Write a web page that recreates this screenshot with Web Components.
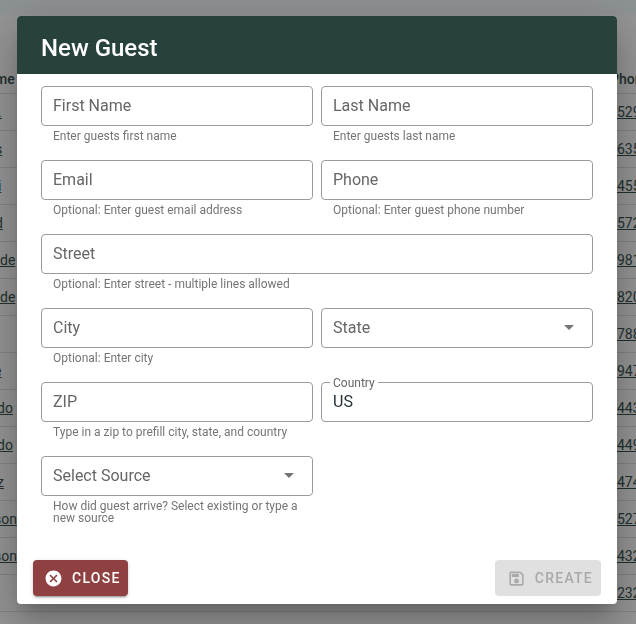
<!DOCTYPE html>
<html lang="en">
<head>
<meta charset="utf-8">
<title>New Guest</title>
<style>
    html, body { margin: 0; height: 100%; overflow: hidden; }
    body { font-family: Roboto, "Liberation Sans", sans-serif; background: #fff; }
    .field-wide { grid-column: 1 / -1; }
</style>
</head>
<body>
<guest-table>
    <guest-row name="me" phone="Phon" shift="-5" head></guest-row>
    <guest-row name="." phone="529" shift="-2"></guest-row>
    <guest-row name="s" phone="635" shift="-5"></guest-row>
    <guest-row name="i" phone="455" shift="-2"></guest-row>
    <guest-row name="d" phone="572" shift="-5"></guest-row>
    <guest-row name="de" phone="981"></guest-row>
    <guest-row name="de" phone="820"></guest-row>
    <guest-row name="" phone="788"></guest-row>
    <guest-row name="e" phone="947" shift="-6"></guest-row>
    <guest-row name="do" phone="443" shift="-3"></guest-row>
    <guest-row name="do" phone="449" shift="-3"></guest-row>
    <guest-row name="z" phone="474" shift="-3"></guest-row>
    <guest-row name="son" phone="527" shift="-6"></guest-row>
    <guest-row name="son" phone="432" shift="-6"></guest-row>
    <guest-row name="" phone="232"></guest-row>
</guest-table>

<guest-dialog>
    <span slot="title">New Guest</span>
    <guest-field label="First Name" hint="Enter guests first name"></guest-field>
    <guest-field label="Last Name" hint="Enter guests last name"></guest-field>
    <guest-field label="Email" hint="Optional: Enter guest email address"></guest-field>
    <guest-field label="Phone" hint="Optional: Enter guest phone number"></guest-field>
    <guest-field class="field-wide" label="Street" hint="Optional: Enter street - multiple lines allowed"></guest-field>
    <guest-field label="City" hint="Optional: Enter city"></guest-field>
    <guest-field label="State" select></guest-field>
    <guest-field label="ZIP" hint="Type in a zip to prefill city, state, and country"></guest-field>
    <guest-field label="Country" value="US"></guest-field>
    <guest-field label="Select Source" select hint="How did guest arrive? Select existing or type a new source"></guest-field>
    <guest-button slot="actions" icon="cancel">Close</guest-button>
    <guest-button slot="actions" icon="save" disabled>Create</guest-button>
</guest-dialog>

<script>
class GuestTable extends HTMLElement {
    constructor() {
        super();
        this.attachShadow({ mode: 'open' });
        this.shadowRoot.innerHTML = `
            <style>
                :host {
                    display: flex;
                    flex-direction: column;
                    height: 100vh;
                    overflow: hidden;
                    padding-top: 57px;
                    box-sizing: border-box;
                    background: linear-gradient(#f2fafc 0 12px, #fff 16px);
                }
            </style>
            <slot></slot>
        `;
    }
}

class GuestRow extends HTMLElement {
    constructor() {
        super();
        this.attachShadow({ mode: 'open' });
    }

    connectedCallback() {
        const isHead = this.hasAttribute('head');
        const shift = this.getAttribute('shift') || 0;
        this.shadowRoot.innerHTML = `
            <style>
                :host {
                    display: flex;
                    flex: none;
                    justify-content: space-between;
                    align-items: center;
                    height: 37px;
                    box-sizing: border-box;
                    padding-top: ${isHead ? 7 : 0}px;
                    border-bottom: 1px solid #e0e0e0;
                    font: ${isHead ? 500 : 400} 14px Roboto, sans-serif;
                    color: #3a5450;
                    text-decoration: ${isHead ? 'none' : 'underline'};
                }
                .name { margin-left: ${shift}px; }
                .phone { width: ${isHead ? 26 : 19}px; overflow: hidden; white-space: nowrap; }
            </style>
            <span class="name">${this.getAttribute('name')}</span>
            <span class="phone">${this.getAttribute('phone')}</span>
        `;
    }
}

class GuestDialog extends HTMLElement {
    constructor() {
        super();
        this.attachShadow({ mode: 'open' });
        this.shadowRoot.innerHTML = `
            <style>
                :host {
                    position: fixed;
                    inset: 0;
                    display: flex;
                    padding: 16px 19px 20px 17px;
                    box-sizing: border-box;
                    background: rgba(0, 0, 0, 0.42);
                }
                .paper {
                    flex: 1;
                    display: flex;
                    flex-direction: column;
                    background: #fff;
                    border-radius: 4px;
                    overflow: hidden;
                    box-shadow: 0 11px 15px -7px rgba(0, 0, 0, 0.2),
                                0 24px 38px 3px rgba(0, 0, 0, 0.14),
                                0 9px 46px 8px rgba(0, 0, 0, 0.12);
                }
                header {
                    height: 58px;
                    display: flex;
                    align-items: center;
                    padding: 5px 24px 0;
                    box-sizing: border-box;
                    background: #27413d;
                    color: #fff;
                    font: 500 24px Roboto, sans-serif;
                }
                .form {
                    flex: 1;
                    display: grid;
                    grid-template-columns: 1fr 1fr;
                    align-content: start;
                    gap: 18px 8px;
                    padding: 12px 24px;
                }
                footer {
                    display: flex;
                    justify-content: space-between;
                    padding: 8px 16px;
                }
            </style>
            <div class="paper">
                <header><slot name="title"></slot></header>
                <div class="form"><slot></slot></div>
                <footer><slot name="actions"></slot></footer>
            </div>
        `;
    }
}

class GuestField extends HTMLElement {
    constructor() {
        super();
        this.attachShadow({ mode: 'open' });
    }

    connectedCallback() {
        const label = this.getAttribute('label');
        const hint = this.getAttribute('hint');
        const value = this.getAttribute('value');
        const arrow = this.hasAttribute('select')
            ? '<svg class="arrow" viewBox="0 0 24 24"><path d="M7 10l5 5 5-5z"/></svg>'
            : '';
        this.shadowRoot.innerHTML = `
            <style>
                :host {
                    display: block;
                    min-width: 0;
                    font-family: Roboto, sans-serif;
                }
                .box {
                    position: relative;
                    display: flex;
                    align-items: center;
                    height: 40px;
                    padding: 0 11px 2px;
                    box-sizing: border-box;
                    border: 1px solid #9b9b9b;
                    border-radius: 4px;
                    font-size: 16px;
                }
                .label { color: #666; flex: 1; }
                .value { color: #263238; flex: 1; }
                /* floated label sits in a gap cut out of the border */
                .float {
                    position: absolute;
                    top: -6px;
                    left: 8px;
                    padding: 0 3px;
                    background: #fff;
                    color: #666;
                    font-size: 12px;
                    line-height: 12px;
                }
                .arrow { width: 24px; height: 24px; fill: #757575; }
                .hint {
                    margin: 4px 12px 0;
                    color: #757575;
                    font-size: 12px;
                    line-height: 12px;
                }
            </style>
            <div class="box">
                ${value
                    ? `<span class="float">${label}</span><span class="value">${value}</span>`
                    : `<span class="label">${label}</span>`}
                ${arrow}
            </div>
            ${hint ? `<div class="hint">${hint}</div>` : ''}
        `;
    }
}

const BUTTON_ICONS = {
    cancel: 'M12 2C6.47 2 2 6.47 2 12s4.47 10 10 10 10-4.47 10-10S17.53 2 12 2zm5 13.59L15.59 17 12 13.41 8.41 17 7 15.59 10.59 12 7 8.41 8.41 7 12 10.59 15.59 7 17 8.41 13.41 12 17 15.59z',
    save: 'M17 3H5c-1.11 0-2 .9-2 2v14c0 1.1.89 2 2 2h14c1.1 0 2-.9 2-2V7l-4-4zm2 16H5V5h11.17L19 7.83V19zm-7-7c-1.66 0-3 1.34-3 3s1.34 3 3 3 3-1.34 3-3-1.34-3-3-3zM6 6h9v4H6z'
};

class GuestButton extends HTMLElement {
    constructor() {
        super();
        this.attachShadow({ mode: 'open' });
    }

    connectedCallback() {
        const isDisabled = this.hasAttribute('disabled');
        this.shadowRoot.innerHTML = `
            <style>
                :host {
                    display: inline-flex;
                    align-items: center;
                    gap: 9px;
                    height: 36px;
                    padding: 0 ${isDisabled ? '8px 0 12px' : '7px 0 11px'};
                    border-radius: 4px;
                    font: 500 14px Roboto, sans-serif;
                    letter-spacing: 1.25px;
                    text-transform: uppercase;
                    background: ${isDisabled ? '#e0e0e0' : '#8f4141'};
                    color: ${isDisabled ? '#a9a9a9' : '#fff'};
                    box-shadow: ${isDisabled ? 'none' : '0 3px 1px -2px rgba(0,0,0,.2), 0 2px 2px 0 rgba(0,0,0,.14), 0 1px 5px 0 rgba(0,0,0,.12)'};
                }
                svg { width: 19px; height: 19px; fill: currentColor; }
            </style>
            <svg viewBox="0 0 24 24"><path d="${BUTTON_ICONS[this.getAttribute('icon')]}"/></svg>
            <slot></slot>
        `;
    }
}

customElements.define('guest-table', GuestTable);
customElements.define('guest-row', GuestRow);
customElements.define('guest-dialog', GuestDialog);
customElements.define('guest-field', GuestField);
customElements.define('guest-button', GuestButton);
</script>
</body>
</html>
